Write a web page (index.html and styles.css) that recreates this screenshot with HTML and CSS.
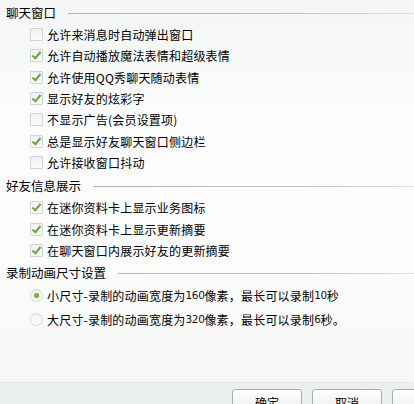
FILE: index.html
```html
<!DOCTYPE html>
<html lang="zh-CN">

<head>
    <meta charset="UTF-8">
    <title>聊天窗口设置</title>
    <link rel="stylesheet" href="styles.css">
</head>

<body>
    <div class="panel">
        <div class="title"><span>聊天窗口</span><i class="line"></i></div>
        <label class="row"><span class="check"></span>允许来消息时自动弹出窗口</label>
        <label class="row"><span class="check on"></span>允许自动播放魔法表情和超级表情</label>
        <label class="row"><span class="check on"></span>允许使用QQ秀聊天随动表情</label>
        <label class="row"><span class="check on"></span>显示好友的炫彩字</label>
        <label class="row"><span class="check"></span>不显示广告(会员设置项)</label>
        <label class="row"><span class="check on"></span>总是显示好友聊天窗口侧边栏</label>
        <label class="row"><span class="check"></span>允许接收窗口抖动</label>

        <div class="title"><span>好友信息展示</span><i class="line"></i></div>
        <label class="row"><span class="check on"></span>在迷你资料卡上显示业务图标</label>
        <label class="row"><span class="check on"></span>在迷你资料卡上显示更新摘要</label>
        <label class="row"><span class="check on"></span>在聊天窗口内展示好友的更新摘要</label>

        <div class="title t3"><span>录制动画尺寸设置</span><i class="line"></i></div>
        <label class="row radio-row"><span class="radio on"></span>小尺寸-录制的动画宽度为<em>160</em>像素，最长可以录制<em>10</em>秒</label>
        <label class="row radio-row"><span class="radio"></span>大尺寸-录制的动画宽度为<em>320</em>像素，最长可以录制<em>6</em>秒。</label>
    </div>

    <div class="footer">
        <button class="btn">确定</button>
        <button class="btn">取消</button>
        <button class="btn"></button>
    </div>
</body>

</html>
```

FILE: styles.css
```css
* {
    margin: 0;
    padding: 0;
    box-sizing: border-box;
}

body {
    width: 414px;
    height: 404px;
    overflow: hidden;
    font-family: "Noto Sans CJK SC", "Liberation Sans", sans-serif;
    font-size: 12px;
    color: #000;
    background: #ebf0ec;
}

.panel {
    height: 383px;
    display: flex;
    flex-direction: column;
    background: linear-gradient(180deg, #f3f6f4 0%, #fbfcfb 30%, #fcfdfc 60%, #f6f8f6 100%);
    border-bottom: 1px solid #e4eae6;
}

.title {
    flex: none;
    height: 24px;
    display: flex;
    align-items: center;
    padding-left: 6px;
    font-size: 12.5px;
}

.title.t3 {
    height: 22px;
}

.title .line {
    flex: 1;
    height: 1px;
    margin-left: 12px;
    margin-top: 2px;
    background: linear-gradient(90deg, #aab5bd 0%, #b4bec5 60%, #dde3e6 100%);
}

.row {
    flex: none;
    height: 21.33px;
    display: flex;
    align-items: center;
    padding-left: 30px;
    letter-spacing: 0.2px;
}

.row em {
    font-style: normal;
    font-family: "DejaVu Sans", sans-serif;
    font-size: 10.5px;
    letter-spacing: -0.4px;
    color: #111;
}

.radio-row {
    height: 24px;
}

.check {
    position: relative;
    width: 13px;
    height: 13px;
    margin-right: 4px;
    border: 1px solid #cfd6da;
    border-radius: 1px;
    background: linear-gradient(180deg, #eef1f3, #fdfdfd);
}

.check.on::after {
    content: "";
    position: absolute;
    left: 3px;
    top: 0;
    width: 3px;
    height: 7px;
    border: solid #6ba534;
    border-width: 0 2px 2px 0;
    transform: rotate(40deg);
}

.radio {
    position: relative;
    width: 13px;
    height: 13px;
    margin-right: 4px;
    border: 1px solid #d3d9dd;
    border-radius: 50%;
    background: linear-gradient(180deg, #eef1f3, #fdfdfd);
}

.radio.on::after {
    content: "";
    position: absolute;
    left: 3px;
    top: 3px;
    width: 5px;
    height: 5px;
    border-radius: 50%;
    background: #7cb342;
    box-shadow: 0 0 1px #a5cf6f;
}

.footer {
    display: flex;
    gap: 10px;
    padding: 6px 0 0 232px;
}

.btn {
    flex: none;
    width: 70px;
    height: 24px;
    border: 1px solid #a3adb4;
    border-radius: 3px;
    background: linear-gradient(180deg, #ffffff, #e9eeeb);
    font-family: "Noto Sans CJK SC", sans-serif;
    font-size: 12px;
    color: #000;
    padding-top: 2px;
}
```
